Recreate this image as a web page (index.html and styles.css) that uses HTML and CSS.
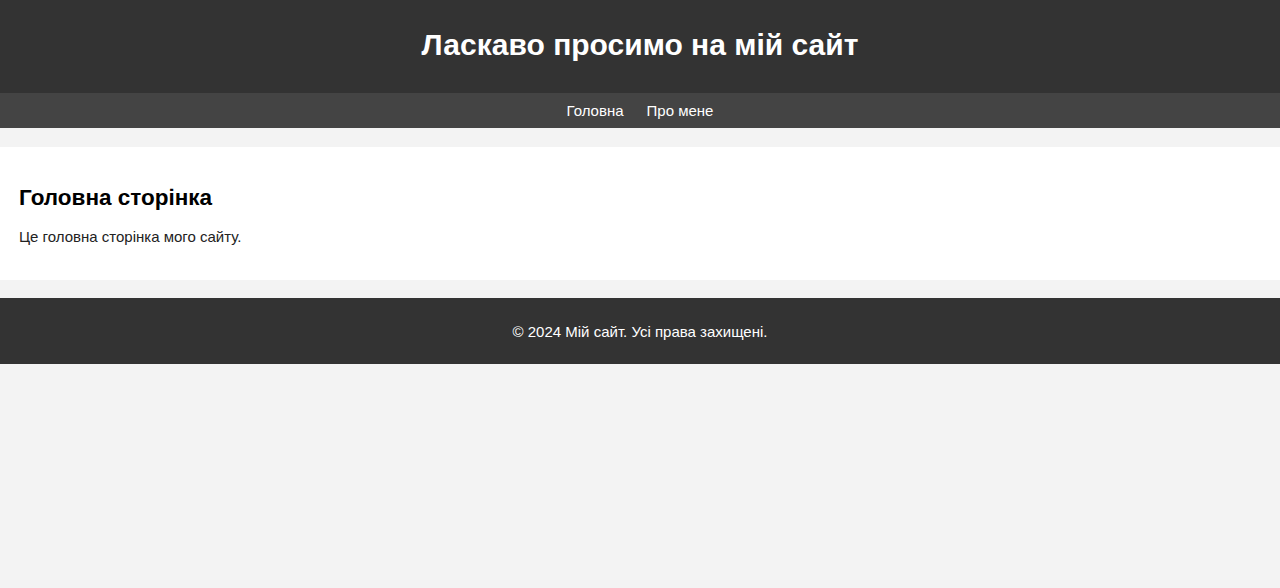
FILE: index.html
```html
<!DOCTYPE html>
<html lang="uk">
<head>
<meta charset="utf-8">
<title>Мій сайт</title>
<link rel="stylesheet" href="styles.css">
</head>
<body>
<header class="site-header">
  <h1 class="site-title">Ласкаво просимо на мій сайт</h1>
</header>
<nav class="site-nav">
  <a href="#" class="nav-link">Головна</a>
  <a href="#" class="nav-link">Про мене</a>
</nav>
<main class="content">
  <h2 class="content-title">Головна сторінка</h2>
  <p class="content-text">Це головна сторінка мого сайту.</p>
</main>
<footer class="site-footer">
  <p class="footer-text">© 2024 Мій сайт. Усі права захищені.</p>
</footer>
</body>
</html>
```
FILE: styles.css
```css
html, body {
  margin: 0;
  padding: 0;
}
body {
  background: #f3f3f3;
  font-family: "Liberation Sans", Arial, sans-serif;
  color: #222;
}
.site-header {
  background: #333;
  color: #fff;
  padding: 27px 0 31px;
  text-align: center;
}
.site-title {
  margin: 0;
  font-size: 30px;
  line-height: 35px;
  font-weight: bold;
}
.site-nav {
  background: #444;
  height: 35px;
  display: flex;
  align-items: center;
  justify-content: center;
  gap: 23px;
}
.nav-link {
  color: #fff;
  text-decoration: none;
  font-size: 15px;
}
.content {
  background: #fff;
  margin: 19px 0 18px;
  padding: 20px 19px 18px;
}
.content-title {
  margin: 18px 0 17px;
  font-size: 22.5px;
  line-height: 1.15;
  color: #000;
}
.content-text {
  margin: 0 0 17px;
  font-size: 15px;
  line-height: 1.15;
}
.site-footer {
  background: #333;
  color: #fff;
  height: 66px;
  display: flex;
  align-items: center;
  justify-content: center;
}
.footer-text {
  margin: 0;
  font-size: 15px;
}
```
